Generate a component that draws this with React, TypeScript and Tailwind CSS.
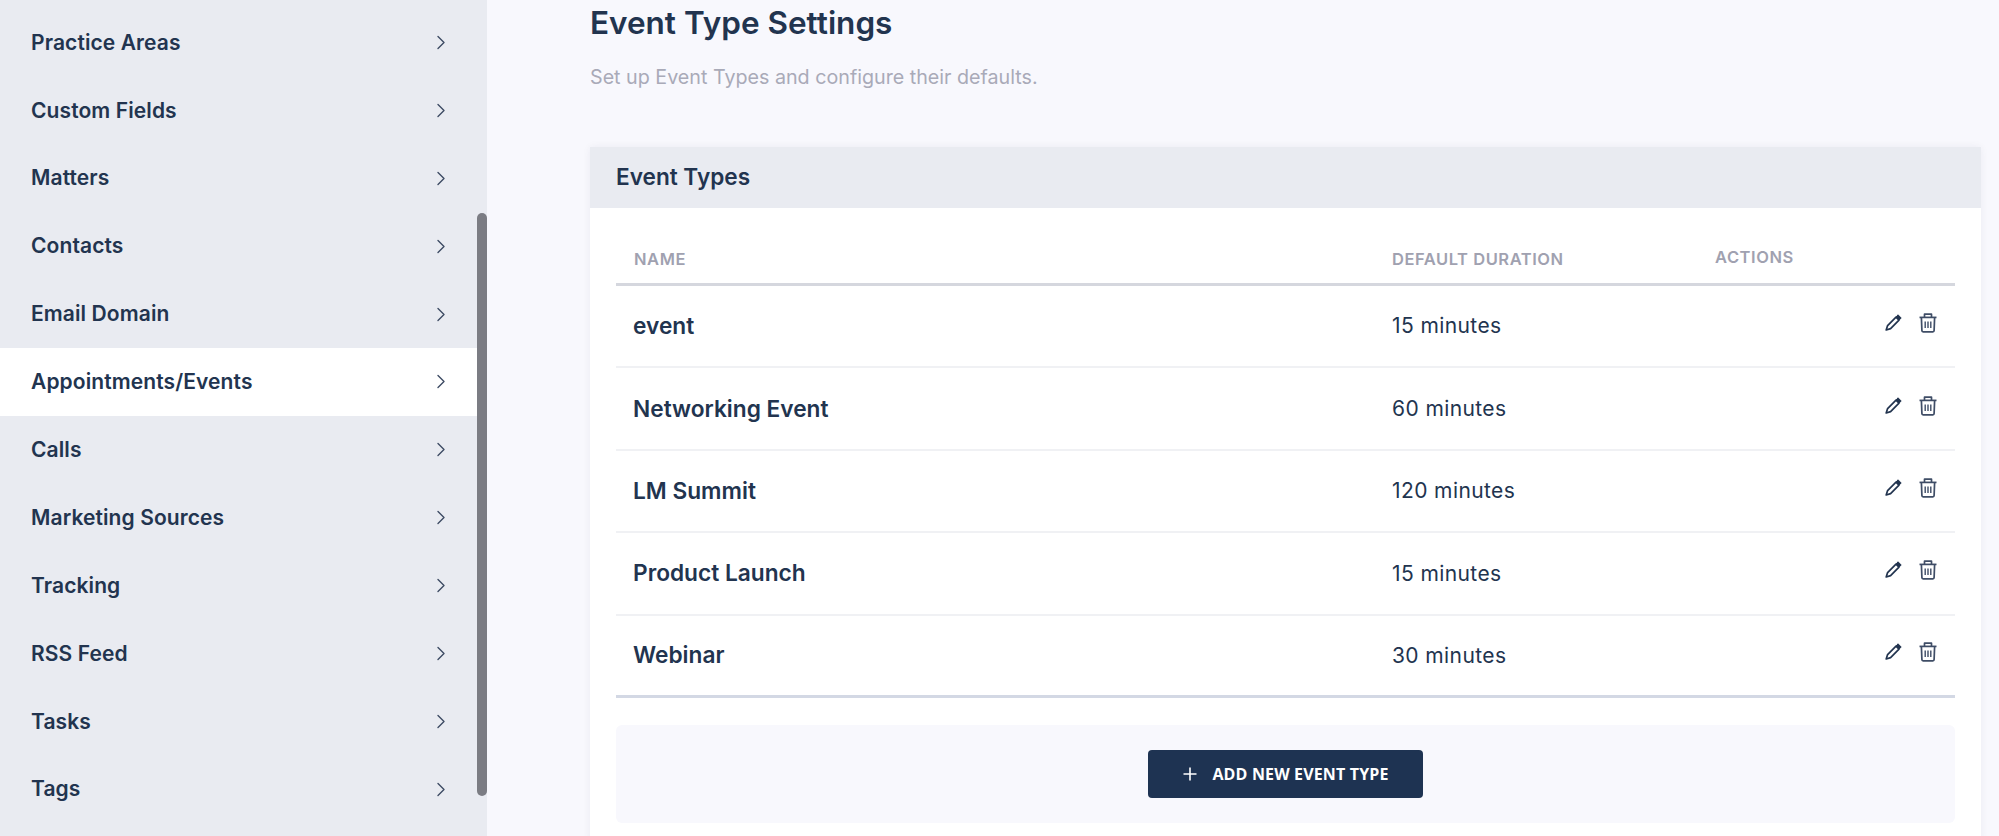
const sideItems = ["Practice Areas","Custom Fields","Matters","Contacts","Email Domain","Appointments/Events","Calls","Marketing Sources","Tracking","RSS Feed","Tasks","Tags"];
const rows = [["event","15 minutes"],["Networking Event","60 minutes"],["LM Summit","120 minutes"],["Product Launch","15 minutes"],["Webinar","30 minutes"]];

function Chevron() {
  return (
    <svg width="8" height="15" viewBox="0 0 8 15" fill="none" stroke="#3d4b63" strokeWidth="1.4" strokeLinecap="round" strokeLinejoin="round">
      <path d="M1 1.5l6 6-6 6" />
    </svg>
  );
}
function Pencil() {
  return (
    <svg width="20" height="20" viewBox="0 0 20 20" fill="none">
      <path d="M13 4.2L16 7.2 7.6 15.6 3.2 17 4.6 12.6Z" stroke="#22344f" strokeWidth="1.7" strokeLinejoin="round" />
      <path d="M13.2 4L15 1.8 18.2 5 16.2 7Z" fill="#22344f" stroke="#22344f" strokeWidth="1" strokeLinejoin="round" />
    </svg>
  );
}
function Trash() {
  return (
    <svg width="20" height="22" viewBox="0 0 20 22" fill="none" stroke="#3f4d66" strokeWidth="1.7" strokeLinejoin="round">
      <path d="M1.5 5.4h17" />
      <path d="M6.5 5V2.2h7V5" />
      <path d="M3.4 5.6l.5 13c0 .8.5 1.3 1.2 1.3h9.8c.7 0 1.2-.5 1.2-1.3l.5-13" />
      <path d="M7.2 9.4v6.6M10 9.4v6.6M12.8 9.4v6.6" strokeWidth="1.4" />
    </svg>
  );
}

export default function App() {
  return (
    <div className="flex h-[836px] w-full overflow-hidden bg-[#f8f8fd] font-['Inter','Noto_Sans',sans-serif] text-[#22344f]">
      <aside className="relative h-full w-[487px] shrink-0 bg-[#e9ebf1] pt-[8.5px]">
        {sideItems.map((t) => (
          <div key={t} className={`flex h-[67.9px] items-center justify-between pl-[31px] pr-[42px] ${t === "Appointments/Events" ? "bg-white" : ""}`}>
            <span className="text-[21px] font-semibold tracking-[0.1px]">{t}</span>
            <Chevron />
          </div>
        ))}
        <div className="absolute left-[477px] top-[213px] h-[583px] w-[10px] rounded-full bg-[#7b7c83]" />
      </aside>
      <main className="flex-1 pl-[103px] pr-[18px]">
        <h1 className="mt-[1px] text-[31.5px] font-semibold leading-[44px]">Event Type Settings</h1>
        <p className="mt-[18px] text-[19.7px] leading-[28px] text-[#a9aab8]">Set up Event Types and configure their defaults.</p>
        <section className="mt-[56px] bg-white shadow-[0_0_8px_rgba(30,40,70,0.06)]">
          <div className="flex h-[61px] items-center bg-[#e9ebf1] px-[26px] pb-[2px] text-[22.6px] font-semibold">Event Types</div>
          <div className="px-[26px] pb-[20px]">
            <div className="flex h-[78px] items-end border-b-[3px] border-[#d5d7de] pb-[11px] text-[16.5px] font-semibold uppercase tracking-[0.55px] text-[#a0a1b0]">
              <span className="w-[776px] pl-[18px]">Name</span>
              <span className="w-[323px]">Default Duration</span>
              <span className="relative -top-[2px]">Actions</span>
            </div>
            {rows.map(([n, d], i) => (
              <div key={n} className={`flex h-[82.4px] items-center ${i === 4 ? "border-b-[3px] border-[#d3d8e4]" : "border-b-2 border-[#f0f1f4]"}`}>
                <span className="w-[776px] pl-[17px] text-[22.7px] font-semibold">{n}</span>
                <span className="w-[323px] text-[21px] tracking-[0.4px]">{d}</span>
                <span className="flex flex-1 items-center justify-end gap-[15px] pr-[17px] -translate-y-[3px]">
                  <Pencil />
                  <Trash />
                </span>
              </div>
            ))}
            <div className="mt-[27px] flex h-[98px] items-center justify-center rounded-md bg-[#f8f8fd]">
              <button className="flex h-[48px] w-[275px] items-center justify-center gap-[14px] rounded bg-[#1e3352] font-['Open_Sans',sans-serif] text-[16px] font-bold uppercase tracking-[0.15px] text-white">
                <svg width="16" height="16" viewBox="0 0 16 16" stroke="white" strokeWidth="1.6"><path d="M8 1.5v13M1.5 8h13" /></svg>
                Add New Event Type
              </button>
            </div>
          </div>
        </section>
      </main>
    </div>
  );
}
